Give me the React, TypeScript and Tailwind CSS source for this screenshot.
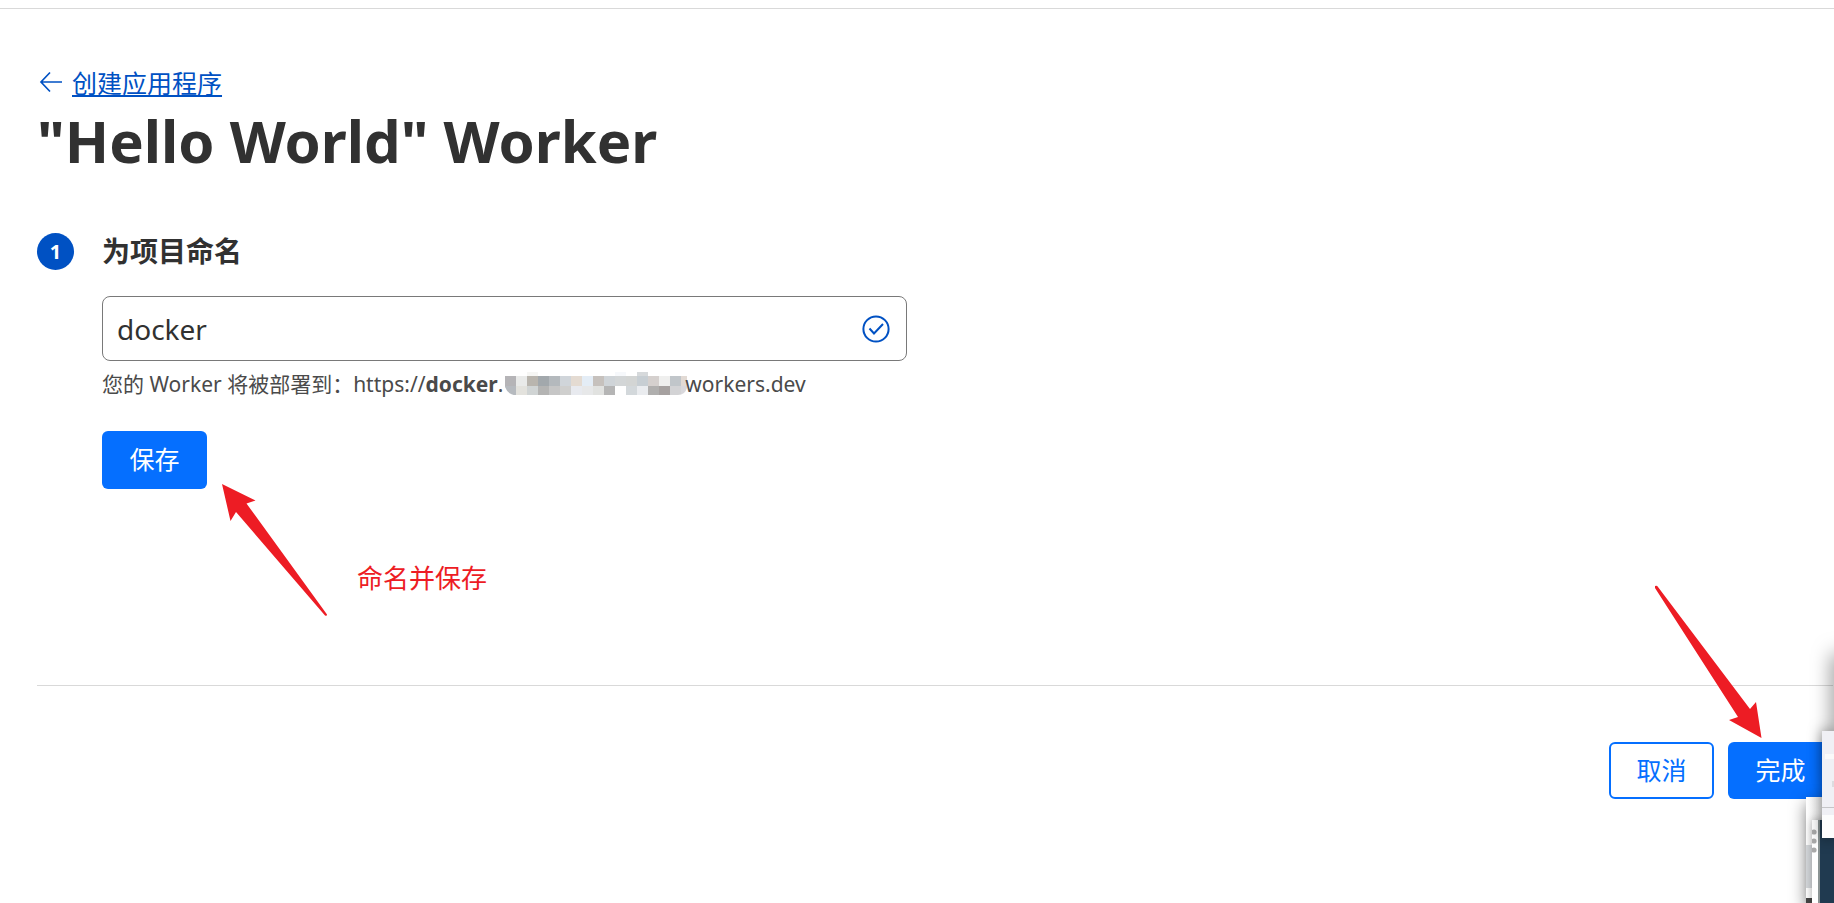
import { useState } from "react";

const mosaicTop = [
  "#b5b4b7", "#e9eae9", "#b9b5ae", "#a2a8ac", "#b4b9bd", "#d0d5da", "#e4dbd2", "#e4edf6", "#c6c1bd",
  "#cfd4d8", "#d3d6d7", "#d3d5d4", "#c7ced3", "#d5d0ce", "#efefee", "#c1c6ca", "#e2dad4",
];
const mosaicBottom = [
  "#b6babf", "#e3e2dd", "#d0d4d4", "#b4b4b3", "#c6c6c6", "#cfcfce", "#e8eaef", "#e7e8e9", "#e1e2e0",
  "#b5b5b5", "#ffffff", "#d3d8db", "#eaecef", "#b0afae", "#a6a1a0", "#d3d3d5", "#d9d8dc",
];

function Mosaic() {
  return (
    <svg className="mb-1 ml-0.5 -mr-0.5 inline-block shrink-0" width="182" height="23" viewBox="0 0 182 23" aria-hidden="true" shapeRendering="crispEdges">
      <clipPath id="mask-shape">
        <path d="M0 0H182V16Q180 23 173 23H11Q3 23 0 15Z" />
      </clipPath>
      <g clipPath="url(#mask-shape)">
        <rect x="22" y="0" width="11" height="4" fill="#f6f6f4" />
        <rect x="110" y="0" width="11" height="4" fill="#f6f8fb" />
        <rect x="132" y="0" width="11" height="4" fill="#d6d9db" />
        {mosaicTop.map((fill, i) => (
          <rect key={"t" + i} x={i * 11} y="4" width="11" height="10" fill={fill} />
        ))}
        {mosaicBottom.map((fill, i) => (
          <rect key={"b" + i} x={i * 11} y="14" width="11" height="9" fill={fill} />
        ))}
      </g>
    </svg>
  );
}

function EdgeWindows() {
  return (
    <div className="pointer-events-none absolute top-0 right-0 h-[903px] w-20 overflow-hidden" aria-hidden="true">
      <div className="absolute top-[655px] -right-3 h-[120px] w-3 shadow-[0_0_20px_1px_rgba(0,0,0,0.5)]" />
      <div className="absolute top-[797px] right-0 h-[106px] w-7 bg-linear-to-r from-white to-[#d8d8d8] shadow-[0_6px_16px_rgba(0,0,0,0.5)]">
        <div className="mt-12 h-[43px] w-1.5 bg-[#d4d7da]" />
        <div className="mt-2.5 h-1.5 w-1.5 bg-[#444]" />
      </div>
      <div className="absolute top-[820px] right-0 flex h-[83px] w-[22px] bg-white shadow-[0_0_8px_rgba(0,0,0,0.3)]">
        <svg width="22" height="83" viewBox="0 0 22 83">
          <circle cx="2" cy="12" r="2.6" fill="#aaa" />
          <circle cx="2" cy="21" r="2.6" fill="#aaa" />
          <circle cx="2" cy="30" r="2.6" fill="#aaa" />
          <rect x="6" width="2" height="83" fill="#8b9494" />
          <rect x="8" width="14" height="83" fill="#203a50" />
        </svg>
      </div>
      <div className="absolute top-[731px] right-0 h-[107px] w-3 bg-[#f0f0f5] shadow-[0_0_14px_rgba(0,0,0,0.5)]">
        <svg width="12" height="107" viewBox="0 0 12 107">
          <rect x="3" y="23" width="9" height="5" fill="#fafafa" />
          <rect x="10" y="50" width="2" height="6" fill="#dcdce0" />
          <rect x="0" y="76" width="12" height="1" fill="#c5c5c8" />
          <rect x="0" y="84" width="12" height="23" fill="#fdfdfd" />
        </svg>
      </div>
    </div>
  );
}

export default function App() {
  const [name, setName] = useState("docker");
  return (
    <div className="relative min-h-screen overflow-hidden bg-white pt-2 font-['Noto_Sans','Noto_Sans_CJK_SC',sans-serif] text-[#313131]">
      <main className="border-t border-[#d9d9d9] pt-14 pr-px pl-[37px]">
        <header>
          <a href="#create" className="flex w-fit items-center gap-2 text-[#0051c3]">
            <svg width="27" height="24" viewBox="0 0 27 24" fill="none" stroke="currentColor" strokeWidth="1.7" aria-hidden="true">
              <path d="M25 11H4M13 1.5L4 11l9 9.500" />
            </svg>
            <span className="text-[25px] leading-9 underline decoration-2 underline-offset-2">创建应用程序</span>
          </a>
          <h1 className="text-[58px] leading-[80px] font-bold">"Hello World" Worker</h1>
        </header>

        <section className="mt-12 flex gap-7">
          <span className="mt-1 flex size-[37px] shrink-0 items-center justify-center rounded-full bg-[#0051c3] text-xl font-bold text-white">
            1
          </span>
          <div className="min-w-0 flex-1">
            <h2 className="text-[28px] leading-[44px] font-bold">
              <label htmlFor="project-name">为项目命名</label>
            </h2>
            <div className="relative mt-[23px] max-w-[805px]">
              <input
                id="project-name"
                value={name}
                onChange={(e) => setName(e.target.value)}
                className="block h-[65px] w-full rounded-lg border border-[#797979] bg-white pr-14 pl-3.5 text-[28px] outline-none"
              />
              <svg className="absolute top-[19px] right-[17px]" width="28" height="28" viewBox="0 0 28 28" fill="none" stroke="#0051c3" strokeWidth="2" aria-hidden="true">
                <circle cx="14" cy="14" r="12.6" />
                <path d="M7.5 13.5l4.5 5 9-9.500" />
              </svg>
            </div>
            <p className="mt-2 flex h-8 items-center text-[21px] whitespace-pre text-[#4a4a4a]">
              <span>您的 Worker 将被部署到：https://<b>{name}</b>.</span>
              <Mosaic />
              <span>workers.dev</span>
            </p>
            <div className="mt-[30px] flex items-start">
              <button type="button" className="h-[58px] w-[105px] rounded-md bg-[#056fff] text-[25px] text-white">
                保存
              </button>
              <svg className="mt-[52px] ml-3.5" width="108" height="134" viewBox="0 0 108 134" fill="#ed1c24" aria-hidden="true">
                <path d="M1 1L34.500 17.500L25.500 20.500L106 131.500Q106 133.500 104 132.500L15 29L9.500 38Z" />
              </svg>
              <p className="mt-[129px] ml-7 text-[26px] leading-9 text-[#ed1c24]">命名并保存</p>
            </div>
          </div>
        </section>

        <footer className="relative mt-[68px] flex justify-end gap-3.5 border-t border-[#d9d9d9] pt-14">
          <svg className="absolute -top-[101px] right-[71px]" width="108" height="154" viewBox="0 0 108 154" fill="#ed1c24" aria-hidden="true">
            <path d="M1 1Q3 0 4 2L96 124L102 117L107.500 153L75 135L84 132L1 3Z" />
          </svg>
          <button type="button" className="h-[57px] w-[105px] rounded-md border-2 border-[#056fff] bg-white text-[25px] text-[#056fff]">
            取消
          </button>
          <button type="button" className="h-[57px] w-[105px] rounded-md bg-[#056fff] text-[25px] text-white">
            完成
          </button>
        </footer>
      </main>
      <EdgeWindows />
    </div>
  );
}
